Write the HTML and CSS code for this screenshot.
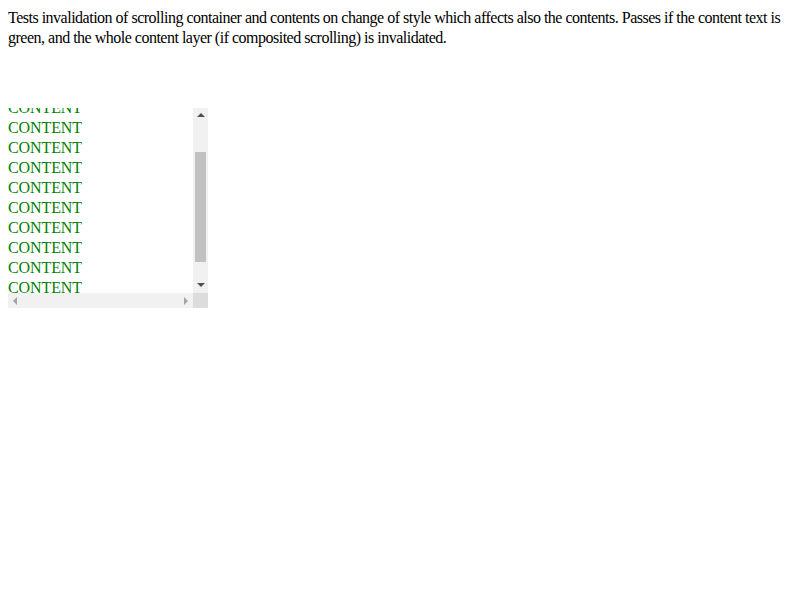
FILE: index.html
```html
<!DOCTYPE html>
<html lang="en">
<head>
    <meta charset="UTF-8">
    <title>Scroll invalidation test</title>
    <link rel="stylesheet" href="styles.css">
</head>
<body>
    <div class="description">Tests invalidation of scrolling container and contents on change of style which affects also the contents. Passes if the content text is green, and the whole content layer (if composited scrolling) is invalidated.</div>
    <div class="scroller">
        <div class="viewport">
            <div class="contents">
                <div class="line">CONTENT</div>
                <div class="line">CONTENT</div>
                <div class="line">CONTENT</div>
                <div class="line">CONTENT</div>
                <div class="line">CONTENT</div>
                <div class="line">CONTENT</div>
                <div class="line">CONTENT</div>
                <div class="line">CONTENT</div>
                <div class="line">CONTENT</div>
                <div class="line">CONTENT</div>
                <div class="line">CONTENT</div>
                <div class="line">CONTENT</div>
                <div class="line">CONTENT</div>
                <div class="line">CONTENT</div>
            </div>
        </div>
        <div class="vbar">
            <div class="btn"><span class="arrow up"></span></div>
            <div class="track"><div class="thumb"></div></div>
            <div class="btn"><span class="arrow down"></span></div>
        </div>
        <div class="hbar">
            <div class="btn"><span class="arrow left"></span></div>
            <div class="track"></div>
            <div class="btn"><span class="arrow right"></span></div>
        </div>
        <div class="corner"></div>
    </div>
</body>
</html>
```

FILE: styles.css
```css
body {
    margin: 8px;
    font-family: "Liberation Serif", "Times New Roman", serif;
    font-size: 16px;
    line-height: 20px;
    color: #000;
}
.description {
    margin-bottom: 60px;
    letter-spacing: -0.5px;
}
.scroller {
    width: 200px;
    height: 200px;
    display: grid;
    grid-template-columns: 185px 15px;
    grid-template-rows: 185px 15px;
}
.viewport {
    overflow: hidden;
    color: green;
}
.contents {
    margin-top: -50px;
}
.line {
    height: 20px;
    line-height: 20px;
    letter-spacing: -0.1px;
}

/* fake scrollbars */
.vbar, .hbar {
    background: #f1f1f1;
    display: flex;
}
.vbar {
    flex-direction: column;
}
.btn {
    width: 15px;
    height: 15px;
    flex: none;
    display: flex;
    justify-content: center;
    align-items: center;
}
.track {
    flex: 1;
}
.vbar .thumb {
    margin: 29px 2px 0;
    height: 110px;
    background: #c1c1c1;
}
.corner {
    background: #dcdcdc;
}
.arrow {
    width: 0;
    height: 0;
    border: 4px solid transparent;
}
.arrow.up {
    border-top: 0;
    border-bottom-color: #505050;
    margin-top: -1px;
}
.arrow.down {
    border-bottom: 0;
    border-top-color: #505050;
    margin-top: -1px;
}
.arrow.left {
    border-left: 0;
    border-right-color: #a3a3a3;
    margin-left: -2px;
}
.arrow.right {
    border-right: 0;
    border-left-color: #a3a3a3;
    margin-left: 1px;
}
```
